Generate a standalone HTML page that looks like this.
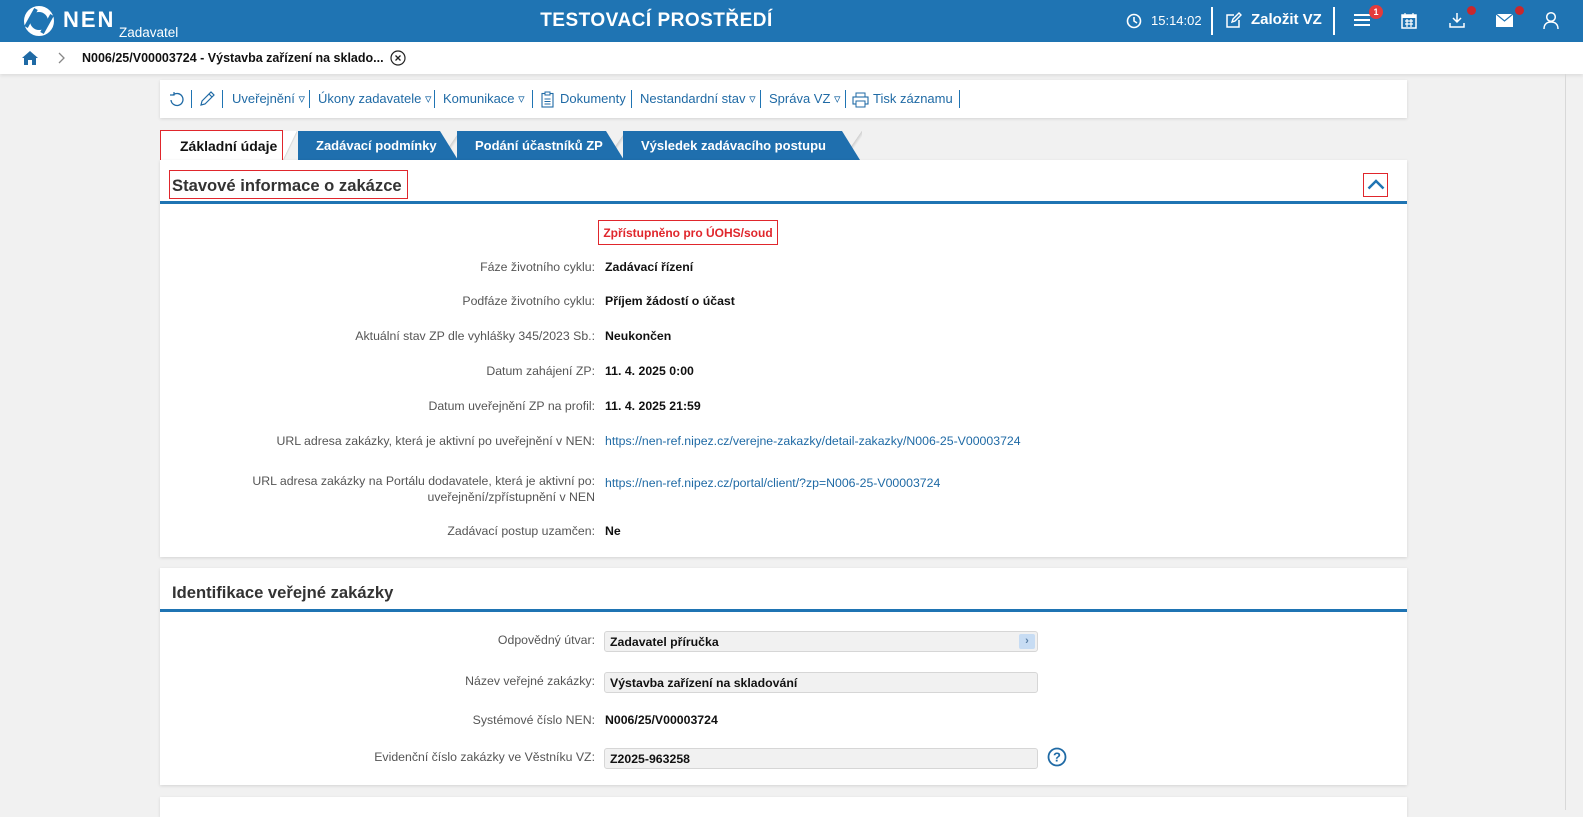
<!DOCTYPE html>
<html><head><meta charset="utf-8"><style>
*{box-sizing:border-box;margin:0;padding:0}
body{width:1583px;height:810px;overflow:hidden;background:#f1f1f1;font-family:"Liberation Sans",sans-serif;font-size:12.3px;color:#111;position:relative}
.hdr{position:absolute;left:0;top:0;width:1583px;height:42px;background:#1f74b3;color:#fff}
.abs{position:absolute}
.bc{position:absolute;top:42px;left:0;width:1583px;height:32px;background:#fff;box-shadow:0 2px 3px rgba(0,0,0,.08)}
.panel{position:absolute;left:160px;width:1247px;background:#fff;box-shadow:0 1px 3px rgba(0,0,0,.12)}
.tb{top:80px;height:38px;color:#1f6aa5;font-size:13px}
.tb span{position:absolute;top:11px;white-space:nowrap}
.sep{position:absolute;top:10px;width:1px;height:18px;background:#1f74b3}
.tab{position:absolute;top:131px;height:29px;color:#fff;font-weight:bold;font-size:13px;line-height:29px;background:#1f6fae;padding-left:18px}
.tab:after{content:"";position:absolute;right:-18px;top:0;border-left:18px solid #1f6fae;border-top:29px solid transparent}
.tab:before{content:"";position:absolute;right:-20px;top:0;width:20px;height:29px;background:linear-gradient(to right bottom,transparent 49%,#cfcfcf 50%,transparent 60%)}
.h2{position:absolute;left:12px;font-size:16.6px;font-weight:bold;color:#333}
.line{position:absolute;left:0;width:1247px;height:3px;background:#1f74b3}
.lbl{position:absolute;right:812px;color:#555;text-align:right;white-space:nowrap}
.val{position:absolute;left:445px;font-weight:bold;white-space:nowrap}
.lnk{position:absolute;left:445px;color:#1f6aa5;white-space:nowrap}
.inp{position:absolute;left:444px;width:434px;height:21px;background:#f1f1f1;border:1px solid #d6d6d6;border-radius:3px;font-weight:bold;padding:3px 0 0 5px}
</style></head><body>
<div class="hdr">
 <svg class="abs" style="left:22px;top:5px" width="34" height="32" viewBox="0 0 34 32"><circle cx="17" cy="16" r="12" fill="none" stroke="#fff" stroke-width="6"/><path d="M4 22 L14 4" stroke="#1f74b3" stroke-width="4"/><path d="M20 28 L30 10" stroke="#1f74b3" stroke-width="4"/></svg>
 <div class="abs" style="left:63px;top:7px;font-size:22px;font-weight:bold;letter-spacing:2px">NEN</div>
 <div class="abs" style="left:119px;top:25px;font-size:13.5px">Zadavatel</div>
 <div class="abs" style="left:0;width:1313px;top:10px;text-align:center;font-size:19px;font-weight:bold;letter-spacing:.5px">TESTOVACÍ PROSTŘEDÍ</div>
 <svg class="abs" style="left:1126px;top:13px" width="16" height="16" viewBox="0 0 16 16"><circle cx="8" cy="8" r="6.5" fill="none" stroke="#fff" stroke-width="1.6"/><path d="M8 4v4l3 2" fill="none" stroke="#fff" stroke-width="1.6"/></svg>
 <div class="abs" style="left:1151px;top:13px;font-size:13px">15:14:02</div>
 <div class="abs" style="left:1211px;top:7px;width:2px;height:28px;background:#fff"></div>
 <svg class="abs" style="left:1225px;top:12px" width="17" height="17" viewBox="0 0 17 17"><path d="M9 3H2v12h12V8" fill="none" stroke="#fff" stroke-width="1.5"/><path d="M7 10l1-3 6-6 2 2-6 6z" fill="none" stroke="#fff" stroke-width="1.4"/></svg>
 <div class="abs" style="left:1251px;top:11px;font-size:15px;font-weight:bold">Založit VZ</div>
 <div class="abs" style="left:1333px;top:7px;width:2px;height:28px;background:#fff"></div>
 <div class="abs" style="left:1354px;top:14px;width:16px;height:2px;background:#fff;box-shadow:0 5px #fff,0 10px #fff"></div>
 <div class="abs" style="left:1369px;top:5px;width:14px;height:14px;border-radius:7px;background:#e43b3b;font-size:9px;text-align:center;line-height:14px;font-weight:bold">1</div>
 <svg class="abs" style="left:1401px;top:12px" width="16" height="17" viewBox="0 0 16 17"><rect x="1" y="3" width="14" height="13" fill="none" stroke="#fff" stroke-width="1.5"/><rect x="1" y="3" width="14" height="3" fill="#fff"/><path d="M4 1v3M12 1v3M4 9h8M4 12h8M6 7v8M10 7v8" stroke="#fff" stroke-width="1.2"/></svg>
 <svg class="abs" style="left:1448px;top:12px" width="18" height="17" viewBox="0 0 18 17"><path d="M9 1v9M5 6l4 4 4-4M2 11v4h14v-4" fill="none" stroke="#fff" stroke-width="1.5"/></svg>
 <div class="abs" style="left:1467px;top:6px;width:9px;height:9px;border-radius:5px;background:#c8282d"></div>
 <svg class="abs" style="left:1496px;top:14px" width="17" height="13" viewBox="0 0 17 13"><rect x="0" y="0" width="17" height="13" fill="#fff"/><path d="M0 0l8.5 7L17 0" fill="none" stroke="#1f74b3" stroke-width="1.2"/></svg>
 <div class="abs" style="left:1515px;top:6px;width:9px;height:9px;border-radius:5px;background:#c8282d"></div>
 <svg class="abs" style="left:1543px;top:11px" width="16" height="18" viewBox="0 0 16 18"><circle cx="8" cy="6" r="4.3" fill="none" stroke="#fff" stroke-width="1.5"/><path d="M1 18c0-5 3-7 7-7s7 2 7 7" fill="none" stroke="#fff" stroke-width="1.5"/></svg>
</div>
<div class="bc">
 <svg class="abs" style="left:21px;top:8px" width="18" height="16" viewBox="0 0 18 16"><path d="M9 1L1 8h2v7h4v-5h4v5h4V8h2z" fill="#1f6aa5"/></svg>
 <svg class="abs" style="left:58px;top:10px" width="8" height="12" viewBox="0 0 8 12"><path d="M1 1l5 5-5 5" fill="none" stroke="#888" stroke-width="1.3"/></svg>
 <div class="abs" style="left:82px;top:9px;font-weight:bold;font-size:12.5px">N006/25/V00003724 - Výstavba zařízení na sklado...</div>
 <svg class="abs" style="left:390px;top:8px" width="16" height="16" viewBox="0 0 16 16"><circle cx="8" cy="8" r="7" fill="none" stroke="#222" stroke-width="1.2"/><path d="M5.5 5.5l5 5M10.5 5.5l-5 5" stroke="#222" stroke-width="1.3"/></svg>
</div>
<div class="abs" style="left:1565px;top:74px;width:1px;height:736px;background:#d8d8d8"></div>
<div class="panel tb">
 <svg class="abs" style="left:9px;top:12px" width="16" height="16" viewBox="0 0 16 16"><path d="M4 3a6 6 0 1 1-2 5" fill="none" stroke="#1f6aa5" stroke-width="1.3"/><path d="M1 3h4v-3" fill="none" stroke="#1f6aa5" stroke-width="1.2"/></svg>
 <div class="sep" style="left:31px"></div>
 <svg class="abs" style="left:39px;top:11px" width="16" height="16" viewBox="0 0 16 16"><path d="M2 14l1-4 9-9 3 3-9 9z M10 3l3 3" fill="none" stroke="#1f6aa5" stroke-width="1.2"/></svg>
 <div class="sep" style="left:62px"></div>
 <span style="left:72px">Uveřejnění ▿</span><div class="sep" style="left:149px"></div>
 <span style="left:158px">Úkony zadavatele ▿</span><div class="sep" style="left:274px"></div>
 <span style="left:283px">Komunikace ▿</span><div class="sep" style="left:372px"></div>
 <svg class="abs" style="left:381px;top:11px" width="13" height="17" viewBox="0 0 13 17"><rect x="1" y="2.5" width="11" height="13.5" fill="none" stroke="#1f6aa5" stroke-width="1.1"/><rect x="4" y="1" width="5" height="3" fill="#fff" stroke="#1f6aa5"/><path d="M3.5 8h6M3.5 10.5h6M3.5 13h6" stroke="#1f6aa5"/></svg>
 <span style="left:400px">Dokumenty</span><div class="sep" style="left:471px"></div>
 <span style="left:480px">Nestandardní stav ▿</span><div class="sep" style="left:600px"></div>
 <span style="left:609px">Správa VZ ▿</span><div class="sep" style="left:685px"></div>
 <svg class="abs" style="left:692px;top:12px" width="17" height="16" viewBox="0 0 17 16"><rect x="4" y="1" width="9" height="4" fill="none" stroke="#1f6aa5"/><rect x="1" y="5" width="15" height="7" fill="none" stroke="#1f6aa5" stroke-width="1.1"/><rect x="4" y="9" width="9" height="6" fill="#fff" stroke="#1f6aa5"/></svg>
 <span style="left:713px">Tisk záznamu</span><div class="sep" style="left:799px"></div>
</div>
<div class="abs" style="left:160px;top:130px;width:123px;height:34px;background:#fff;border:1px solid #e0262c;font-weight:bold;font-size:14px;padding:7px 0 0 19px">Základní údaje</div>
<div class="abs" style="left:283px;top:131px;width:14px;height:29px;background:linear-gradient(to right bottom,#fff 49%,#d5d5d5 50%,#f1f1f1 56%)"></div>
<div class="tab" style="left:298px;width:142px">Zadávací podmínky</div>
<div class="tab" style="left:457px;width:149px">Podání účastníků ZP</div>
<div class="tab" style="left:623px;width:219px">Výsledek zadávacího postupu</div>
<div class="panel" style="top:160px;height:397px">
 <div class="abs" style="left:9px;top:10px;width:239px;height:29px;border:1px solid #e0262c"></div>
 <div class="h2" style="top:16px">Stavové informace o zakázce</div>
 <div class="abs" style="left:1203px;top:13px;width:25px;height:24px;border:1px solid #e0262c"></div>
 <svg class="abs" style="left:1207px;top:19px" width="18" height="11" viewBox="0 0 18 11"><path d="M1.5 9.5L9 2l7.5 7.5" fill="none" stroke="#1f74b3" stroke-width="2.5"/></svg>
 <div class="line" style="top:41px"></div>
 <div class="abs" style="left:438px;top:60px;width:180px;height:25px;border:1px solid #e0262c;color:#e0262c;font-weight:bold;font-size:12px;text-align:center;padding-top:5px">Zpřístupněno pro ÚOHS/soud</div>
 <div class="lbl" style="top:100px">Fáze životního cyklu:</div><div class="val" style="top:100px">Zadávací řízení</div>
 <div class="lbl" style="top:134px">Podfáze životního cyklu:</div><div class="val" style="top:134px">Příjem žádostí o účast</div>
 <div class="lbl" style="top:169px">Aktuální stav ZP dle vyhlášky 345/2023 Sb.:</div><div class="val" style="top:169px">Neukončen</div>
 <div class="lbl" style="top:204px">Datum zahájení ZP:</div><div class="val" style="top:204px">11. 4. 2025 0:00</div>
 <div class="lbl" style="top:239px">Datum uveřejnění ZP na profil:</div><div class="val" style="top:239px">11. 4. 2025 21:59</div>
 <div class="lbl" style="top:274px">URL adresa zakázky, která je aktivní po uveřejnění v NEN:</div><div class="lnk" style="top:274px;width:435px;overflow:hidden">https://nen-ref.nipez.cz/verejne-zakazky/detail-zakazky/N006-25-V00003724</div>
 <div class="lbl" style="top:313px;line-height:16px">URL adresa zakázky na Portálu dodavatele, která je aktivní po:<br>uveřejnění/zpřístupnění v NEN</div><div class="lnk" style="top:316px">https://nen-ref.nipez.cz/portal/client/?zp=N006-25-V00003724</div>
 <div class="lbl" style="top:364px">Zadávací postup uzamčen:</div><div class="val" style="top:364px">Ne</div>
</div>
<div class="panel" style="top:568px;height:217px">
 <div class="h2" style="top:15px">Identifikace veřejné zakázky</div>
 <div class="line" style="top:41px"></div>
 <div class="lbl" style="top:65px">Odpovědný útvar:</div><div class="inp" style="top:63px">Zadavatel příručka<div class="abs" style="right:2px;top:2px;width:16px;height:15px;background:#c7dcf3;border-radius:2px;color:#5a7fa5;font-size:11px;text-align:center;line-height:15px">›</div></div>
 <div class="lbl" style="top:106px">Název veřejné zakázky:</div><div class="inp" style="top:104px">Výstavba zařízení na skladování</div>
 <div class="lbl" style="top:145px">Systémové číslo NEN:</div><div class="val" style="top:145px">N006/25/V00003724</div>
 <div class="lbl" style="top:182px">Evidenční číslo zakázky ve Věstníku VZ:</div><div class="inp" style="top:180px">Z2025-963258</div>
 <svg class="abs" style="left:887px;top:179px" width="20" height="20" viewBox="0 0 20 20"><circle cx="10" cy="10" r="8.5" fill="none" stroke="#1f6aa5" stroke-width="1.8"/><text x="10" y="14.5" text-anchor="middle" font-family="Liberation Sans" font-weight="bold" font-size="13" fill="#1f6aa5">?</text></svg>
</div>
<div class="panel" style="top:797px;height:20px"></div>
</body></html>
